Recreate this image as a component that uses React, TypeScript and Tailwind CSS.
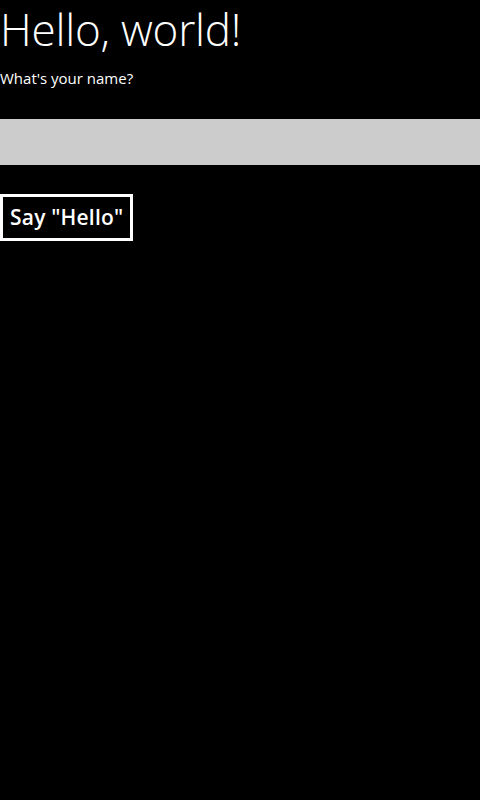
export default function App() {
  return (
    <div className="flex h-[800px] w-[480px] flex-col bg-black text-white [font-family:'Open_Sans',sans-serif]">
      <h1 className="text-[44px] font-light leading-[58px] tracking-[-0.2px]">Hello, world!</h1>
      <p className="mt-[10px] text-[15px] font-normal leading-[20px]">What's your name?</p>
      <div className="mt-[31px] h-[46px] w-full bg-[#cccccc]" />
      <div className="mt-[29px]">
        <button
          type="button"
          className="h-[47px] border-[3px] border-white px-[7px] text-[21px] font-semibold leading-none tracking-[0.2px]"
        >
          Say "Hello"
        </button>
      </div>
    </div>
  )
}
